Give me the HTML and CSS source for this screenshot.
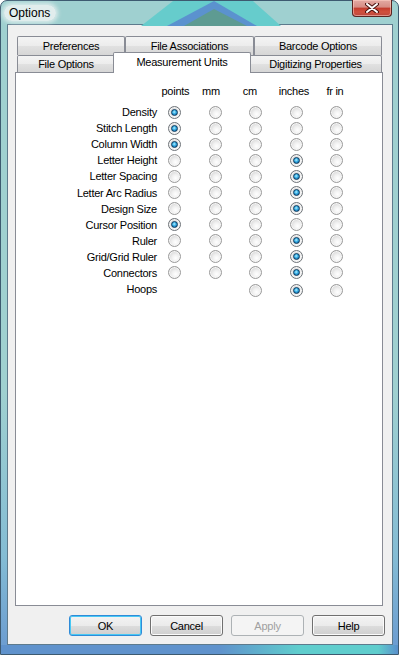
FILE: index.html
```html
<!DOCTYPE html>
<html lang="en">
<head>
  <meta charset="UTF-8" />
  <meta name="viewport" content="width=device-width, initial-scale=1.0" />
  <title>Options</title>
  <link rel="stylesheet" href="styles.css">
</head>
<body>
  <div class="window">
    <svg class="glass" width="399" height="25" viewBox="0 0 399 25">
      <polygon points="172,0 252,0 280,25 140,25" fill="#66cccc" />
      <polygon points="213,0 256,25 166,25" fill="#5b92cf" />
      <polygon points="213,8 246,25 183,25" fill="#5e9b92" />
    </svg>
    <div class="titlebar">
      <span class="title">Options</span>
      <button class="close" title="Close">
        <svg width="14" height="10" viewBox="0 0 14 10">
          <path d="M2 1 L12 9 M12 1 L2 9" stroke="#4a1410" stroke-width="4" stroke-linecap="round" />
          <path d="M2 1 L12 9 M12 1 L2 9" stroke="#ffffff" stroke-width="2" stroke-linecap="round" />
        </svg>
      </button>
    </div>

    <div class="client">
      <div class="tabs">
        <div class="tab-row back">
          <div class="tab tab-pref">Preferences</div>
          <div class="tab tab-assoc">File Associations</div>
          <div class="tab tab-barcode">Barcode Options</div>
        </div>
        <div class="tab-row front">
          <div class="tab tab-file">File Options</div>
          <div class="tab tab-units selected">Measurement Units</div>
          <div class="tab tab-digit">Digitizing Properties</div>
        </div>
      </div>

      <div class="panel">
        <div class="units">
          <span></span>
          <span class="head">points</span>
          <span class="head">mm</span>
          <span class="head">cm</span>
          <span class="head">inches</span>
          <span class="head">fr in</span>

          <span class="name">Density</span>
          <label class="cell"><input type="radio" name="density" checked></label>
          <label class="cell"><input type="radio" name="density"></label>
          <label class="cell"><input type="radio" name="density"></label>
          <label class="cell"><input type="radio" name="density"></label>
          <label class="cell"><input type="radio" name="density"></label>

          <span class="name">Stitch Length</span>
          <label class="cell"><input type="radio" name="stitch" checked></label>
          <label class="cell"><input type="radio" name="stitch"></label>
          <label class="cell"><input type="radio" name="stitch"></label>
          <label class="cell"><input type="radio" name="stitch"></label>
          <label class="cell"><input type="radio" name="stitch"></label>

          <span class="name">Column Width</span>
          <label class="cell"><input type="radio" name="column" checked></label>
          <label class="cell"><input type="radio" name="column"></label>
          <label class="cell"><input type="radio" name="column"></label>
          <label class="cell"><input type="radio" name="column"></label>
          <label class="cell"><input type="radio" name="column"></label>

          <span class="name">Letter Height</span>
          <label class="cell"><input type="radio" name="lheight"></label>
          <label class="cell"><input type="radio" name="lheight"></label>
          <label class="cell"><input type="radio" name="lheight"></label>
          <label class="cell"><input type="radio" name="lheight" checked></label>
          <label class="cell"><input type="radio" name="lheight"></label>

          <span class="name">Letter Spacing</span>
          <label class="cell"><input type="radio" name="lspacing"></label>
          <label class="cell"><input type="radio" name="lspacing"></label>
          <label class="cell"><input type="radio" name="lspacing"></label>
          <label class="cell"><input type="radio" name="lspacing" checked></label>
          <label class="cell"><input type="radio" name="lspacing"></label>

          <span class="name">Letter Arc Radius</span>
          <label class="cell"><input type="radio" name="arc"></label>
          <label class="cell"><input type="radio" name="arc"></label>
          <label class="cell"><input type="radio" name="arc"></label>
          <label class="cell"><input type="radio" name="arc" checked></label>
          <label class="cell"><input type="radio" name="arc"></label>

          <span class="name">Design Size</span>
          <label class="cell"><input type="radio" name="design"></label>
          <label class="cell"><input type="radio" name="design"></label>
          <label class="cell"><input type="radio" name="design"></label>
          <label class="cell"><input type="radio" name="design" checked></label>
          <label class="cell"><input type="radio" name="design"></label>

          <span class="name">Cursor Position</span>
          <label class="cell"><input type="radio" name="cursor" checked></label>
          <label class="cell"><input type="radio" name="cursor"></label>
          <label class="cell"><input type="radio" name="cursor"></label>
          <label class="cell"><input type="radio" name="cursor"></label>
          <label class="cell"><input type="radio" name="cursor"></label>

          <span class="name">Ruler</span>
          <label class="cell"><input type="radio" name="ruler"></label>
          <label class="cell"><input type="radio" name="ruler"></label>
          <label class="cell"><input type="radio" name="ruler"></label>
          <label class="cell"><input type="radio" name="ruler" checked></label>
          <label class="cell"><input type="radio" name="ruler"></label>

          <span class="name">Grid/Grid Ruler</span>
          <label class="cell"><input type="radio" name="grid"></label>
          <label class="cell"><input type="radio" name="grid"></label>
          <label class="cell"><input type="radio" name="grid"></label>
          <label class="cell"><input type="radio" name="grid" checked></label>
          <label class="cell"><input type="radio" name="grid"></label>

          <span class="name">Connectors</span>
          <label class="cell"><input type="radio" name="conn"></label>
          <label class="cell"><input type="radio" name="conn"></label>
          <label class="cell"><input type="radio" name="conn"></label>
          <label class="cell"><input type="radio" name="conn" checked></label>
          <label class="cell"><input type="radio" name="conn"></label>

          <span class="name hoops">Hoops</span>
          <span class="cell"></span>
          <span class="cell"></span>
          <label class="cell"><input type="radio" name="hoops"></label>
          <label class="cell"><input type="radio" name="hoops" checked></label>
          <label class="cell"><input type="radio" name="hoops"></label>
        </div>
      </div>

      <div class="buttons">
        <button class="btn default">OK</button>
        <button class="btn">Cancel</button>
        <button class="btn" disabled>Apply</button>
        <button class="btn">Help</button>
      </div>
    </div>
  </div>
</body>
</html>
```

FILE: styles.css
```css
* {
  box-sizing: border-box;
}
body {
  margin: 0;
  background: #ffffff;
  font-family: "Liberation Sans", Arial, sans-serif;
  font-size: 11px;
  letter-spacing: -0.25px;
  color: #000;
}
.window {
  position: relative;
  width: 399px;
  height: 655px;
  display: flex;
  flex-direction: column;
  padding: 0 5px 9px 6px;
  border: 1px solid #3d5a70;
  border-radius: 7px 7px 0 0;
  background:
    linear-gradient(to right, #5f92cc 0, #5f92cc 55%, #5fcdcd 75%, #5fcdcd 95%, #5a90cc 100%) bottom / 100% 9px no-repeat,
    linear-gradient(to bottom, #9fd0d0 0, #9fd0d0 60%, #84bcd4 85%, #6a9ad0 100%);
}
.glass {
  position: absolute;
  top: 0;
  left: 0;
}
.titlebar {
  position: relative;
  height: 23px;
  display: flex;
  align-items: flex-start;
  justify-content: space-between;
}
.title {
  margin: 4px 0 0 -3px;
  padding: 1px 6px 1px 5px;
  font-size: 12px;
  letter-spacing: 0;
  line-height: 14px;
  border-radius: 8px;
  background: rgba(236, 242, 242, 0.85);
  box-shadow: 0 0 4px 2px rgba(236, 242, 242, 0.8);
}
.close {
  width: 40px;
  height: 17px;
  margin: -1px 1px 0 0;
  padding: 0;
  border: 1px solid #5a2421;
  border-top: none;
  border-radius: 0 0 4px 4px;
  background: linear-gradient(to bottom, #e3aaa3 0, #d68c84 45%, #c23b2d 50%, #d1513e 75%, #b9463d 100%);
  box-shadow: inset 0 0 0 1px rgba(255, 210, 200, 0.55);
  display: flex;
  align-items: center;
  justify-content: center;
}
.client {
  flex: 1;
  display: flex;
  flex-direction: column;
  background: #f0f0f0;
  border: 1px solid #5d7a8c;
  padding: 11px 7px 8px 7px;
}
.tabs {
  margin: 0 3px 0 2px;
}
.tab-row {
  display: flex;
}
.tab-row.back {
  height: 19px;
}
.tab-row.front {
  height: 17px;
}
.tab {
  display: flex;
  align-items: center;
  justify-content: center;
  border: 1px solid #898c95;
  border-bottom: none;
  border-radius: 2px 2px 0 0;
  background: linear-gradient(to bottom, #f4f4f4 0, #ececec 50%, #e1e1e1 51%, #d6d6d6 100%);
  white-space: nowrap;
}
.tab-pref { width: 108px; }
.tab-assoc { width: 129px; }
.tab-barcode { width: 128px; }
.tab-file { width: 98px; }
.tab-units { width: 138px; }
.tab-digit { width: 133px; }
.tab.selected {
  position: relative;
  z-index: 1;
  height: 21px;
  margin: -3px -2px 0 -2px;
  background: #ffffff;
  align-items: flex-start;
  padding-top: 3px;
}
.panel {
  flex: 1;
  background: #ffffff;
  border: 1px solid #898c95;
  margin-right: 2px;
  padding-top: 10px;
}
.units {
  display: grid;
  grid-template-columns: 142px repeat(5, 40.6px);
  grid-template-rows: 21px repeat(11, 16.1px) 19px;
  align-items: center;
}
.head {
  align-self: start;
  line-height: 16px;
  padding-left: 3.5px;
}
.head:nth-child(5) {
  padding-left: 0;
  margin-left: -1px;
}
.head:nth-child(6) {
  padding-left: 6px;
}
.name {
  text-align: right;
  padding-right: 1px;
  white-space: nowrap;
}
.name.hoops {
  margin-top: -3px;
}
.cell {
  display: flex;
  align-items: center;
  padding-left: 10px;
}
input[type="radio"] {
  appearance: none;
  -webkit-appearance: none;
  margin: 0;
  width: 13px;
  height: 13px;
  border-radius: 50%;
  border: 1px solid #9a9a9a;
  background: radial-gradient(circle at 60% 65%, #ffffff 0, #f1f1f1 35%, #d4d4d4 80%, #c6c6c6 100%);
  box-shadow: inset 0 0 0 1px #f6f6f6;
  display: flex;
  align-items: center;
  justify-content: center;
}
input[type="radio"]:checked {
  border-color: #6e7378;
}
input[type="radio"]:checked::after {
  content: "";
  width: 7px;
  height: 7px;
  border-radius: 50%;
  box-sizing: border-box;
  border: 1px solid #0c3a5e;
  background: radial-gradient(circle at 45% 40%, #b9f0ff 0, #3cb2e6 40%, #1777b5 75%, #0d4f85 100%);
}
.buttons {
  display: flex;
  justify-content: flex-end;
  gap: 8px;
  margin-top: 9px;
}
.btn {
  width: 73px;
  height: 21px;
  padding: 0;
  border: 1px solid #707070;
  border-radius: 3px;
  font-family: inherit;
  font-size: 11px;
  letter-spacing: -0.25px;
  color: #000;
  background: linear-gradient(to bottom, #f3f3f3 0, #ebebeb 50%, #dddddd 51%, #cfcfcf 100%);
  box-shadow: inset 0 0 0 1px #fbfbfb;
}
.btn.default {
  border-color: #2f8bd8;
  box-shadow: inset 0 0 0 1px #48c8f4;
}
.btn:disabled {
  color: #a0a0a0;
  border-color: #adb2b5;
  background: #f4f4f4;
  box-shadow: none;
}
```
